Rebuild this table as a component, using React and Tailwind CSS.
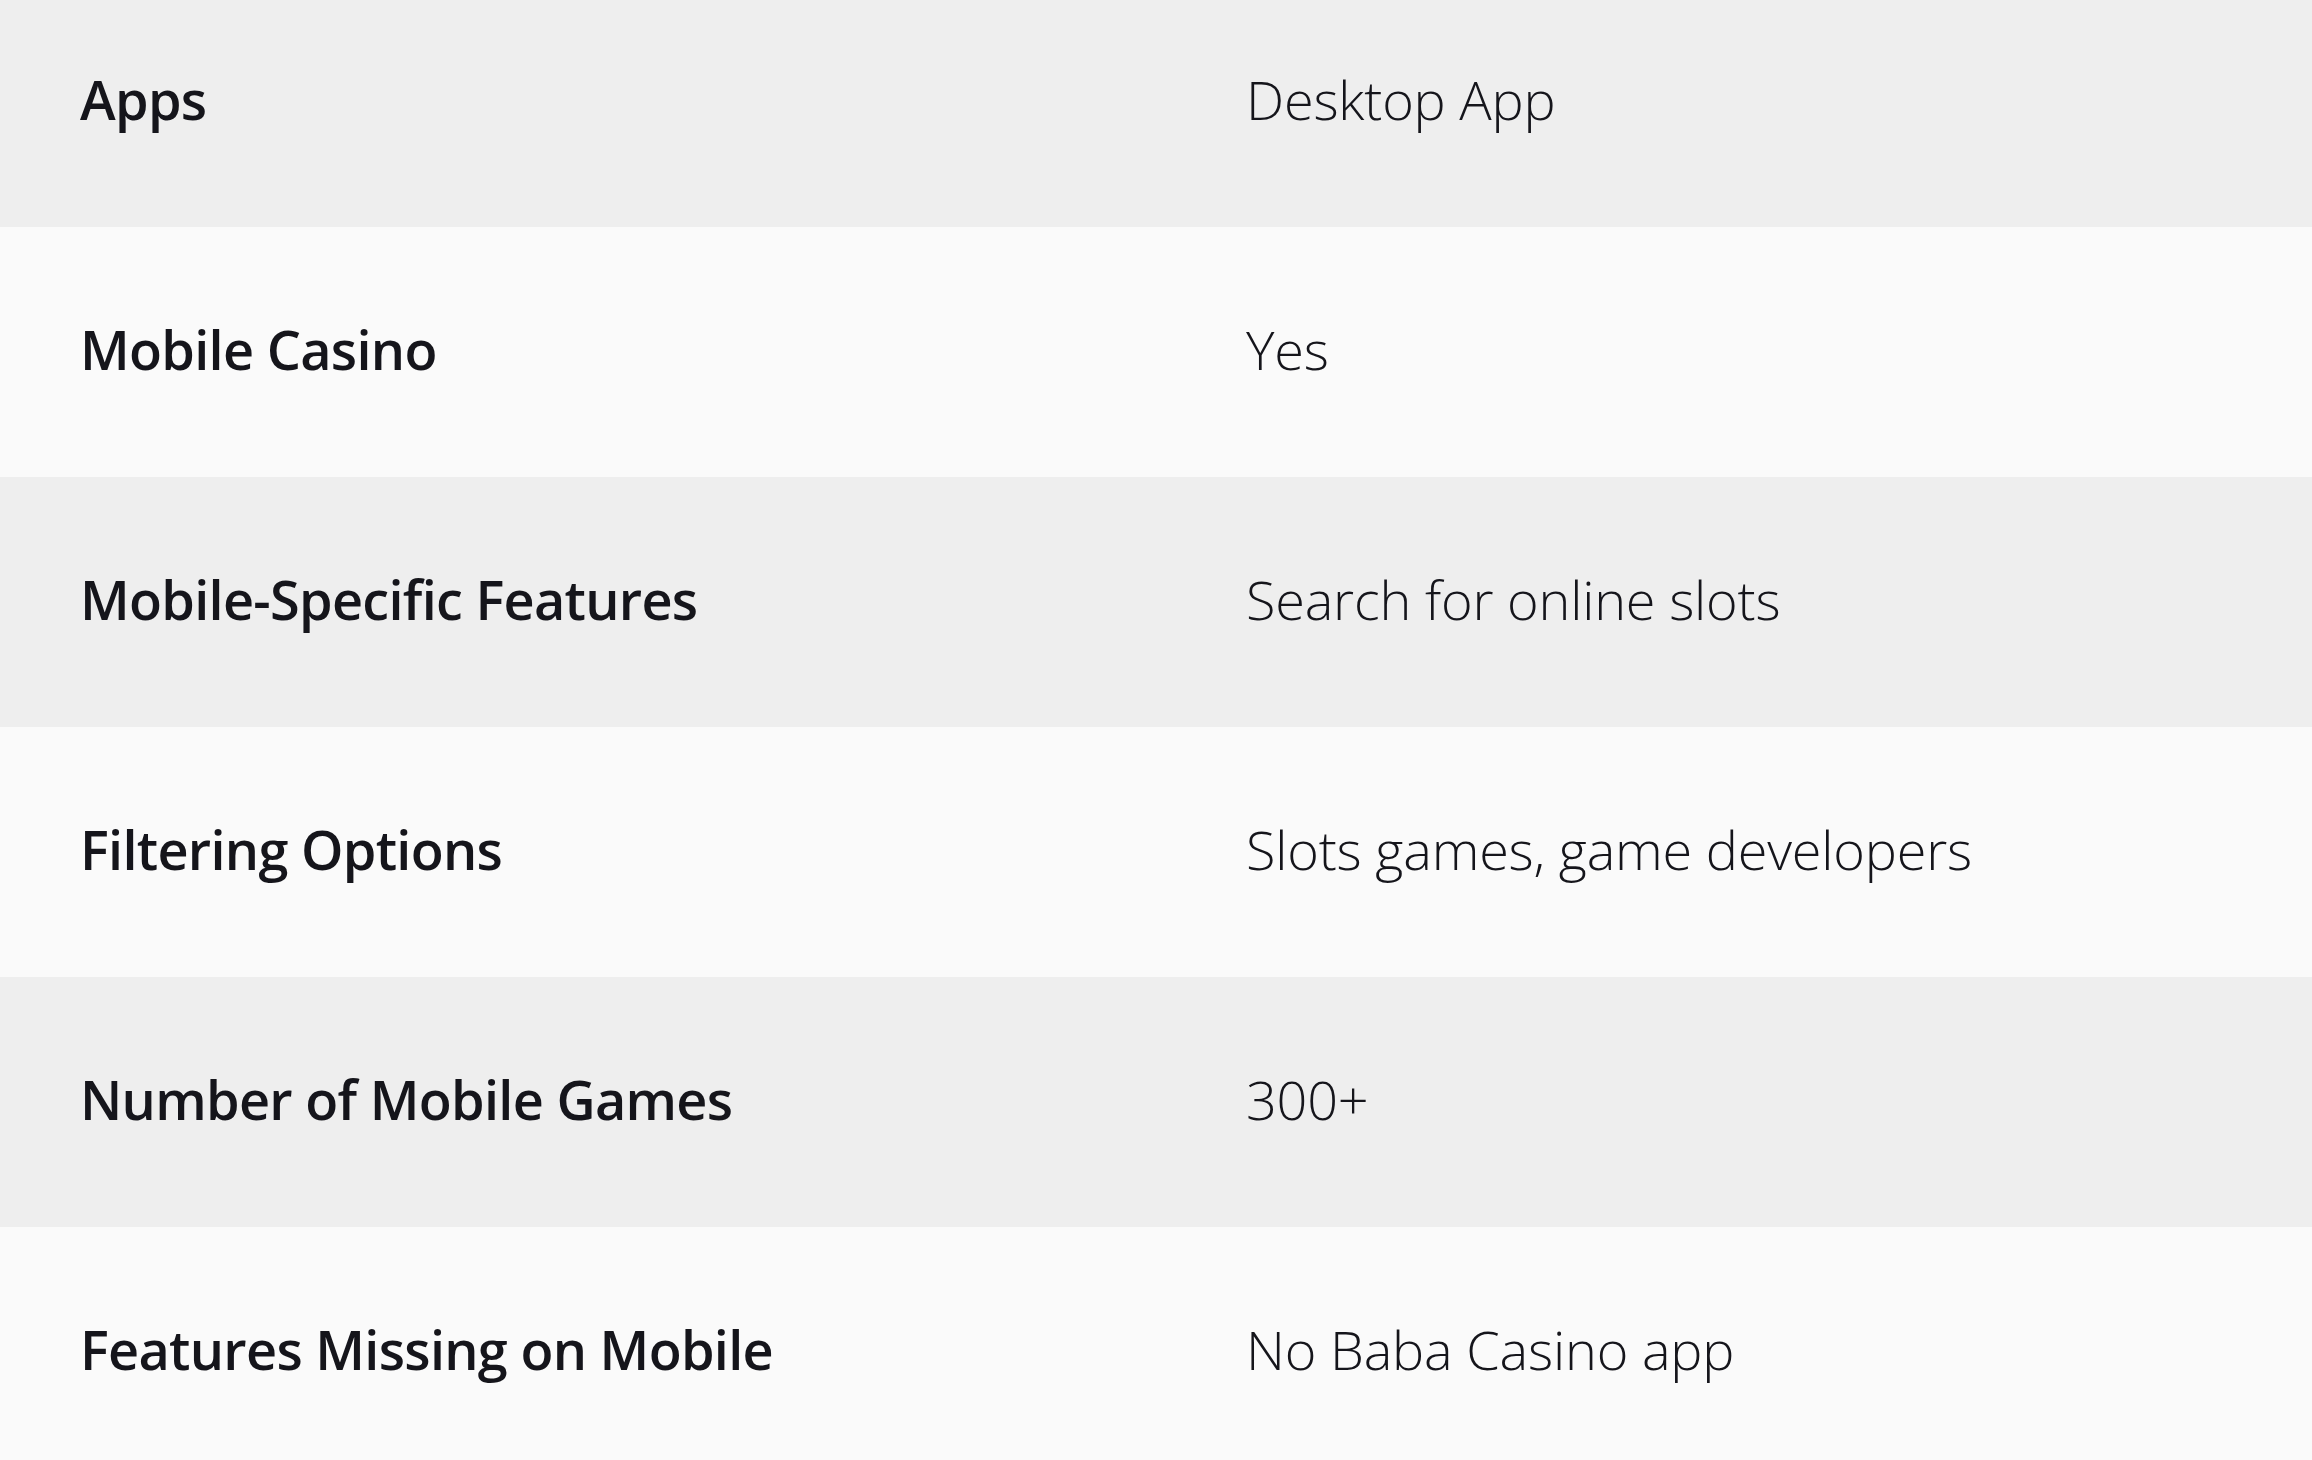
const rows = [
  ['Apps', 'Desktop App'],
  ['Mobile Casino', 'Yes'],
  ['Mobile-Specific Features', 'Search for online slots'],
  ['Filtering Options', 'Slots games, game developers'],
  ['Number of Mobile Games', '300+'],
  ['Features Missing on Mobile', 'No Baba Casino app'],
];

export default function App() {
  return (
    <div className="w-[2312px] h-[1460px] overflow-hidden bg-[#fafafa] font-['Open_Sans',sans-serif] text-[#15151b]">
      <div className="-mt-[23px]">
        {rows.map(([label, value], i) => (
          <div
            key={label}
            className={`grid grid-cols-[1166px_1fr] h-[250px] items-center pb-[6px] ${
              i % 2 === 0 ? 'bg-[#eeeeee]' : 'bg-[#fafafa]'
            }`}
          >
            <div className="pl-[80px] text-[54px] font-semibold tracking-[-0.7px]">{label}</div>
            <div className="pl-[80px] text-[54px] font-light tracking-[-0.2px]">{value}</div>
          </div>
        ))}
      </div>
    </div>
  );
}
